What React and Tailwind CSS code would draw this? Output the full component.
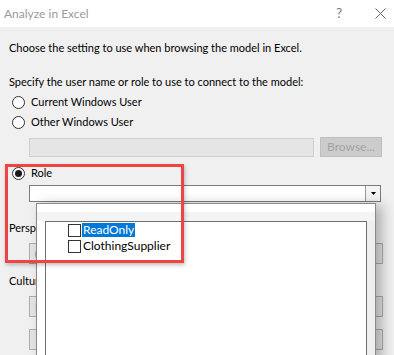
import React from "react";

function Radio({ checked, label }) {
  return (
    <div className="flex items-center h-[20px] pl-[3px] gap-[6px]">
      <span className="w-[13px] h-[13px] rounded-full border border-[#333] bg-white flex items-center justify-center">
        {checked && <span className="w-[7px] h-[7px] rounded-full bg-[#1a1a1a]" />}
      </span>
      <span>{label}</span>
    </div>
  );
}

function Check({ label, selected }) {
  return (
    <div className="flex items-center h-[16px]">
      <span className="w-[13px] h-[13px] border border-[#333] bg-white mr-[1px]" />
      <span className={selected ? "bg-[#0078d7] text-white px-[1px] leading-[14px]" : "px-[1px] leading-[14px]"}>
        {label}
      </span>
    </div>
  );
}

// combo boxes sitting behind the popup
function BackCombo({ text }) {
  return (
    <div className="ml-[20px] w-[354px] h-[21px] border border-[#adadad] bg-[#e5e5e5] flex items-center justify-between px-[5px]">
      <span className="text-[#1c3f94]">{text}</span>
      <svg width="8" height="5" viewBox="0 0 8 5" className="mr-[1px]">
        <path d="M0.5 0.5 L4 4 L7.5 0.5" fill="none" stroke="#444" strokeWidth="1" />
      </svg>
    </div>
  );
}

export default function App() {
  return (
    <div
      className="relative w-[394px] h-[355px] overflow-hidden bg-[#f0f0f0] text-[11px] text-black"
      style={{ fontFamily: 'Lato, "Noto Sans", sans-serif' }}
    >
      {/* Title bar */}
      <div className="h-[27px] bg-white flex items-center justify-between pl-[4px] pr-[8px]">
        <span className="text-[#9a9a9a] text-[12px]">Analyze in Excel</span>
        <div className="flex items-center gap-[33px] text-[#777]">
          <span className="text-[13px]">?</span>
          <svg width="11" height="11" viewBox="0 0 11 11">
            <path d="M0.5 0.5 L10.5 10.5 M10.5 0.5 L0.5 10.5" stroke="#666" strokeWidth="1" />
          </svg>
        </div>
      </div>

      {/* Body */}
      <div className="pl-[9px] leading-[16px]">
        <p className="mt-[13px]">Choose the setting to use when browsing the model in Excel.</p>
        <p className="mt-[18px]">Specify the user name or role to use to connect to the model:</p>
        <div className="mt-[2px]">
          <Radio label="Current Windows User" />
          <Radio label="Other Windows User" />
        </div>
        <div className="flex items-center mt-[5px] ml-[20px] gap-[6px]">
          <div className="w-[285px] h-[19px] bg-[#e5e5e5] border border-[#cfcfcf]" />
          <div className="w-[62px] h-[20px] bg-[#cccccc] border border-[#bfbfbf] text-[#a3a3a3] text-[12px] flex items-center justify-center">
            Browse...
          </div>
        </div>
        <div className="mt-[6px]">
          <Radio checked label="Role" />
        </div>
        <div className="ml-[20px] mt-[2px] w-[352px] h-[17px] border border-[#7a7a7a] bg-white flex justify-end">
          <div className="w-[15px] h-full border-l border-[#9a9a9a] bg-[#f4f4f4] flex items-center justify-center">
            <svg width="5" height="3" viewBox="0 0 5 3">
              <path d="M0 0 H5 L2.5 3 Z" fill="#000" />
            </svg>
          </div>
        </div>
        <p className="mt-[18px]">Perspective:</p>
        <div className="mt-[7px]">
          <BackCombo text="(Default)" />
        </div>
        <p className="mt-[9px]">Culture:</p>
        <div className="mt-[7px]">
          <BackCombo text="English" />
        </div>
        <div className="mt-[12px] ml-[20px] w-[354px] h-[21px] border border-[#adadad] bg-[#e5e5e5]" />
      </div>

      {/* Role dropdown popup */}
      <div className="absolute left-[36px] top-[203px] w-[340px] h-[170px] border border-[#8a8a8a] bg-white shadow-[6px_2px_12px_rgba(0,0,0,0.28)]">
        <div className="h-[8px] bg-white" />
        <div className="h-[9px] bg-[#f4f4f4]" />
        <div className="flex h-full">
          <div className="w-[8px] bg-white" />
          <div className="w-[322px] h-full border border-[#6f6f6f] bg-white pl-[22px] text-[12px]">
            <Check label="ReadOnly" selected />
            <Check label="ClothingSupplier" />
          </div>
          <div className="flex-1 bg-[#efefef]" />
        </div>
      </div>

      {/* Highlight box */}
      <div className="absolute left-[5px] top-[164px] w-[179px] h-[99px] border-[3px] border-[#ee4444] shadow-[1px_2px_4px_rgba(0,0,0,0.25)]" />
    </div>
  );
}
